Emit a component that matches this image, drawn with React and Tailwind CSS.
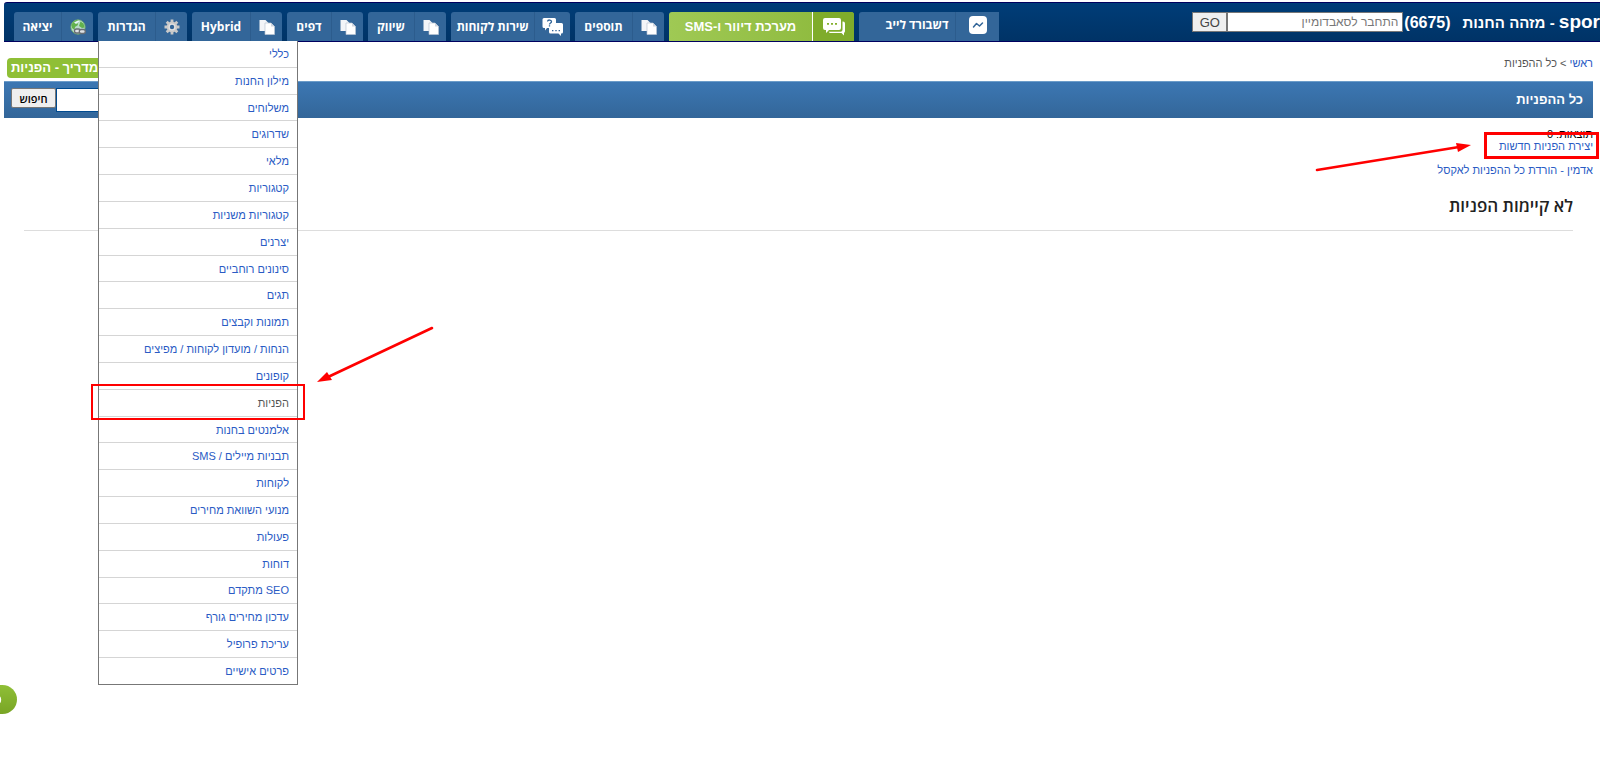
import React from 'react';
import clsx from 'clsx';

const PagesIcon = () => (
  <svg width="16" height="16" viewBox="0 0 16 16" aria-hidden="true">
    <path d="M.5 1h6l2.500 2.500V12H.5z" fill="#f3f5f8" />
    <path d="M6 4h6l3.500 3.500V15.500H6z" fill="#fff" stroke="#b9c4d2" strokeWidth=".7" />
    <path d="M12 4v3.500h3.500" fill="#cfd6df" />
  </svg>
);

const GlobeIcon = () => (
  <svg width="16" height="16" viewBox="0 0 16 16" aria-hidden="true">
    <circle cx="8" cy="8" r="7.200" fill="#b9dcc9" stroke="#6fae62" strokeWidth=".8" />
    <path d="M1.500 6C2.500 3 5 1 8 1l1.500 1.500-2 1.500.5 2-3 2-.5 3L2 9z" fill="#62b24c" />
    <path d="M10.500 2.500l3 2 1.200 4-2.700.5-3-2z" fill="#62b24c" />
    <path d="M4 3.500l4-2 2 .5-4 3z" fill="#e9f6ff" />
    <g fill="#dfe3e6" stroke="#686e74" strokeWidth="1.300">
      <rect x="4.500" y="10" width="6" height="4" rx="2" />
      <rect x="9.300" y="10.500" width="6" height="4" rx="2" />
    </g>
  </svg>
);

const GearIcon = () => (
  <svg width="16" height="16" viewBox="0 0 16 16" aria-hidden="true">
    <g stroke="#c9c9c9" strokeWidth="2.800">
      <path d="M8 .5v15M.5 8h15M2.700 2.700l10.600 10.600M13.300 2.700L2.700 13.300" />
    </g>
    <circle cx="8" cy="8" r="5.400" fill="#c9c9c9" />
    <circle cx="8" cy="8" r="3.600" fill="#e2e2e2" />
    <circle cx="8" cy="8" r="2.200" fill="#336699" />
  </svg>
);

const HelpChatIcon = () => (
  <svg width="21" height="18" viewBox="0 0 21 18" aria-hidden="true">
    <path d="M2 0h10.500A1.500 1.500 0 0 1 14 1.500V10H5l-2 2.500V10H2A1.500 1.500 0 0 1 .5 8.500v-7A1.500 1.500 0 0 1 2 0z" fill="#fff" />
    <path d="M14 5h5.500A1.500 1.500 0 0 1 21 6.500V14a1.500 1.500 0 0 1-1.500 1.500H19V18l-2.500-2.500h-8A1.500 1.500 0 0 1 7 14v-4h7z" fill="#fff" />
    <path d="M5.500 3.500C5.700 1.500 9.500 1.500 9.500 3.700c0 1.300-2 1.300-2 2.800M7.500 7.300v1.300" fill="none" stroke="#336699" strokeWidth="1.300" />
    <path d="M10 12.700h1.400M13.300 12.700h1.400M16.600 12.700H18" stroke="#336699" strokeWidth="1.200" />
  </svg>
);

const SmsIcon = () => (
  <svg width="22" height="18" viewBox="0 0 22 18" aria-hidden="true">
    <path d="M19.500 3.500h.5a2 2 0 0 1 2 2V13a2 2 0 0 1-1 1.800V17.500l-2.500-2.500H7.500a2 2 0 0 1-1.800-1.200H17.500a2 2 0 0 0 2-2z" fill="#fff" />
    <path d="M2 0h14a2 2 0 0 1 2 2v8a2 2 0 0 1-2 2H6l-3 3v-3H2a2 2 0 0 1-2-2V2a2 2 0 0 1 2-2z" fill="#fff" />
    <path d="M4 5.800h2M8 5.800h2M12 5.800h2" stroke="#84b02e" strokeWidth="1.800" />
  </svg>
);

const ChartIcon = () => (
  <svg width="18" height="18" viewBox="0 0 18 18" aria-hidden="true">
    <rect width="18" height="18" rx="4" fill="#fff" />
    <path d="M4.500 11l3-3.500 3 2.500 3-3" fill="none" stroke="#336699" strokeWidth="1.500" strokeLinecap="round" strokeLinejoin="round" />
  </svg>
);

// first item is the rightmost tab
const tabs = [
  { label: 'דשבורד לייב', icon: ChartIcon, width: 'w-[140px]', cell: 'w-11', tone: 'flat' },
  { label: 'מערכת דיוור ו-SMS', icon: SmsIcon, width: 'w-[185px]', cell: 'w-[42px]', tone: 'green' },
  { label: 'תוספים', icon: PagesIcon, width: 'w-[89px]', cell: 'w-[32px]' },
  { label: 'שירות לקוחות', icon: HelpChatIcon, width: 'w-[119px]', cell: 'w-[36px]' },
  { label: 'שיווק', icon: PagesIcon, width: 'w-[78px]', cell: 'w-[32px]' },
  { label: 'דפים', icon: PagesIcon, width: 'w-[76px]', cell: 'w-[32px]' },
  { label: 'Hybrid', icon: PagesIcon, width: 'w-[90px]', cell: 'w-[32px]' },
  { label: 'הגדרות', icon: GearIcon, width: 'w-[89px]', cell: 'w-[32px]', open: true },
  { label: 'יציאה', icon: GlobeIcon, width: 'w-[79px]', cell: 'w-[32px]' },
];

const settingsMenu = [
  'כללי',
  'מילון החנות',
  'משלוחים',
  'שדרוגים',
  'מלאי',
  'קטגוריות',
  'קטגוריות משניות',
  'יצרנים',
  'סינונים רוחביים',
  'תגים',
  'תמונות וקבצים',
  'הנחות / מועדון לקוחות / מפיצים',
  'קופונים',
  'הפניות',
  'אלמנטים בחנות',
  'תבניות מיילים / SMS',
  'לקוחות',
  'מנועי השוואת מחירים',
  'פעולות',
  'דוחות',
  'SEO מתקדם',
  'עדכון מחירים גורף',
  'עריכת פרופיל',
  'פרטים אישיים',
];

const SettingsDropdown = () => (
  <ul className="absolute top-full left-0 z-10 flex h-[644px] w-[200px] flex-col border border-t-0 border-[#777] bg-white">
    {settingsMenu.map((item) => {
      const current = item === 'הפניות';
      return (
        <li key={item} className="relative flex-1 border-b border-[#d5d5d5] last:border-b-0">
          <a
            href="#"
            className={clsx(
              'flex h-full items-center px-2 pt-px text-[11px] leading-none',
              current ? 'text-[#555]' : 'text-[#2a5bc4]'
            )}
          >
            {item}
          </a>
          {current && (
            <>
              <span className="absolute -inset-x-2 -top-1.5 -bottom-1 border-2 border-[#f00]" />
              <svg className="absolute -top-16 left-[217px]" width="120" height="60" viewBox="0 0 120 60" aria-hidden="true">
                <path d="M116 2L12 51" stroke="#f00" strokeWidth="2.600" strokeLinecap="round" />
                <path d="M1 56l10-10 5 8z" fill="#f00" />
              </svg>
            </>
          )}
        </li>
      );
    })}
  </ul>
);

const NavTab = ({ tab }) => {
  const Icon = tab.icon;
  return (
    <li className={clsx('relative h-[29px] shrink-0', tab.width)}>
      <a
        href="#"
        className={clsx(
          'flex h-full items-stretch overflow-hidden font-bold text-white',
          tab.tone === 'green' && 'rounded-t-[3px] bg-gradient-to-r from-[#9fc954] to-[#8cb83a] text-[13px]',
          tab.tone === 'flat' && "rounded-tl-[3px] bg-[#336699] font-['Open_Sans',sans-serif] text-[12px]",
          !tab.tone && "rounded-t-[3px] bg-[#336699] font-['Open_Sans',sans-serif] text-[12px]"
        )}
      >
        <span
          className={clsx(
            'flex shrink-0 items-center justify-center border-l',
            tab.cell,
            tab.tone === 'green' ? 'border-white bg-[#7fac2b]' : 'border-[#2c5c8d]',
            tab.tone === 'flat' && 'pb-1'
          )}
        >
          <Icon />
        </span>
        <span className={clsx('flex flex-1 items-center justify-center whitespace-nowrap', tab.tone === 'flat' && 'pb-1 pl-5')}>
          {tab.label}
        </span>
      </a>
      {tab.open && <SettingsDropdown />}
    </li>
  );
};

const Header = () => (
  <header className="ml-1 flex h-10 items-end justify-between rounded-tl-[3px] border-y border-[#00005f] bg-gradient-to-b from-[#003d78] to-[#003366] pl-[10px]">
    <form className="flex h-full items-center whitespace-nowrap" onSubmit={(e) => e.preventDefault()}>
      <h1 className="flex items-baseline gap-3 font-bold text-white">
        <span className="text-[15px]">
          <span className="text-[19px]">spor</span> - מזהה החנות
        </span>
        <span className="text-[16px]">(6675)</span>
      </h1>
      <input
        type="text"
        aria-label="התחבר לסאבדומיין"
        placeholder="התחבר לסאבדומיין"
        className="mr-px h-5 w-[176px] border border-[#777] bg-white px-1 text-[12px] placeholder:text-[#777]"
      />
      <button type="submit" className="h-5 w-[35px] border border-[#777] bg-[#efefef] text-[13px] leading-none text-[#444]">
        GO
      </button>
    </form>
    <nav>
      <ul className="flex gap-[5px]">
        {tabs.map((tab) => (
          <NavTab key={tab.label} tab={tab} />
        ))}
      </ul>
    </nav>
  </header>
);

const App = () => (
  <div dir="rtl" className="relative min-h-screen overflow-hidden bg-white pt-[2px] font-['Liberation_Sans',Arial,sans-serif] text-[11px] text-black">
    <Header />

    <main className="mr-[7px] ml-1">
      <div className="flex h-[39px] items-center justify-between">
        <p className="pt-1 text-[#555]">
          <a href="#" className="text-[#2a5bc4]">ראשי</a> &gt; כל ההפניות
        </p>
        <a href="#" className="mt-3 ml-[3px] h-5 w-[140px] rounded-[4px] bg-[#8fbf36] px-1 text-left text-[13px] leading-5 font-bold text-white">
          מדריך - הפניות
        </a>
      </div>

      <div className="flex h-[37px] items-center justify-between border-t border-[#6c9cc9] bg-gradient-to-b from-[#3c77b3] to-[#336699] pr-[10px] pl-[7px]">
        <h2 className="text-[13px] font-bold text-white">כל ההפניות</h2>
        <form className="flex items-start" onSubmit={(e) => e.preventDefault()}>
          <input type="text" aria-label="חיפוש" className="h-6 w-[150px] border border-[#004a8f] bg-white px-1" />
          <button type="submit" className="h-5 w-[45px] rounded-[2px] border border-[#777] bg-[#efefef] font-['Open_Sans',sans-serif] text-[11px] leading-none font-semibold">
            חיפוש
          </button>
        </form>
      </div>

      <p className="mt-2.5 leading-3">תוצאות: 0</p>
      <p className="relative w-fit leading-3">
        <a href="#" className="text-[#2a5bc4]">יצירת הפניות חדשות</a>
        <span className="absolute -top-2 -right-[6px] h-[27px] w-[115px] border-3 border-[#f00]" />
        <svg className="absolute top-0 right-[120px]" width="160" height="32" viewBox="0 0 160 32" aria-hidden="true">
          <path d="M4 30L146 7" stroke="#f00" strokeWidth="2.600" strokeLinecap="round" />
          <path d="M158 5l-15-2 2 9z" fill="#f00" />
        </svg>
      </p>
      <p className="mt-3 leading-3">
        <a href="#" className="text-[#2a5bc4]">אדמין - הורדת כל ההפניות לאקסל</a>
      </p>

      <h3 className="mr-5 ml-5 border-b border-[#ddd] pt-[18px] pb-3 font-['Open_Sans',sans-serif] text-[17px] leading-6 font-semibold text-[#222]">
        לא קיימות הפניות
      </h3>
    </main>

    <a
      href="#"
      aria-label="צור קשר"
      className="fixed bottom-[60px] -left-6 flex h-[29px] w-[41px] items-center overflow-hidden rounded-r-full bg-gradient-to-b from-[#8fbf36] to-[#79a525] pr-[15px] text-[14px] font-bold text-white"
    >
      ט
    </a>
  </div>
);

export default App;
